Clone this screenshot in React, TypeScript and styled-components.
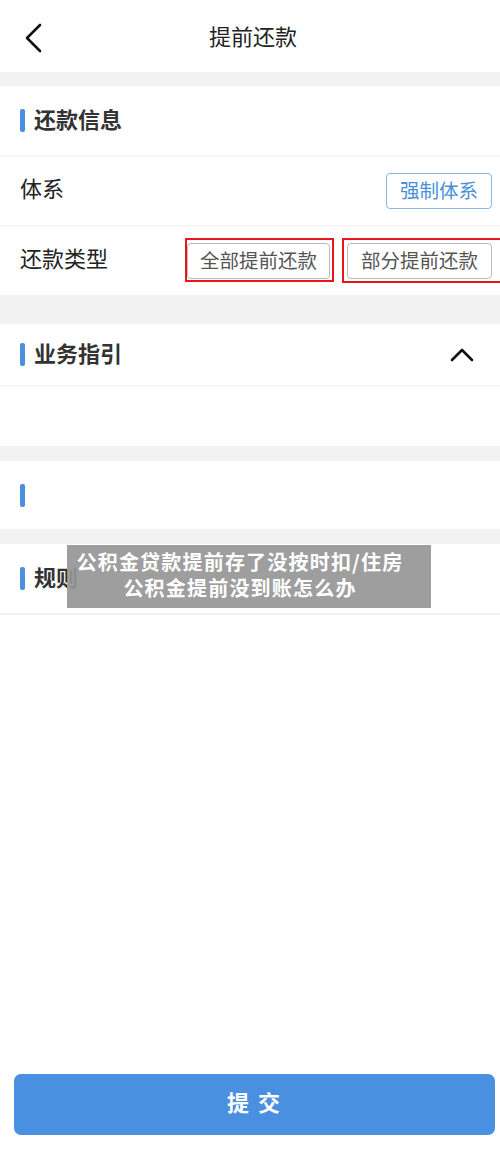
import React from "react";
import styled, { createGlobalStyle } from "styled-components";

const Global = createGlobalStyle`
  html, body { margin: 0; padding: 0; background: #fff; }
  body { overflow-x: hidden; font-family: "Noto Sans CJK SC", "Noto Sans", sans-serif; }
  * { box-sizing: border-box; }
`;

const Page = styled.div`
  position: relative;
  width: 500px;
  min-height: 1154px;
  display: flex;
  flex-direction: column;
  background: #f2f2f2;
  overflow: hidden;
`;

const Header = styled.header`
  height: 72px;
  background: #fff;
  display: flex;
  align-items: center;
  justify-content: center;
  position: relative;
`;

const BackBtn = styled.div`
  position: absolute;
  left: 22px;
  top: 22px;
  width: 24px;
  height: 32px;
`;

const Title = styled.h1`
  margin: 0 0 2px 6px;
  font-size: 22px;
  font-weight: 400;
  color: #222;
  letter-spacing: 0;
`;

const Card = styled.section<{ $gap: number }>`
  margin-top: ${(p) => p.$gap}px;
  background: #fff;
  display: flex;
  flex-direction: column;
`;

const SectionHead = styled.div<{ $h: number; $flat?: boolean }>`
  height: ${(p) => p.$h}px;
  display: flex;
  align-items: center;
  padding: 0 26px 0 20px;
  border-bottom: ${(p) => (p.$flat ? "none" : "2px solid #f5f5f5")};
`;

const Bar = styled.span`
  width: 5px;
  height: 23px;
  border-radius: 2px;
  background: #4a90e0;
  margin-right: 9px;
`;

const SectionTitle = styled.span`
  font-size: 22px;
  font-weight: 700;
  color: #333;
  flex: 1;
  margin-bottom: 5px;
`;

const Row = styled.div<{ $last?: boolean }>`
  height: ${(p) => (p.$last ? 68 : 70)}px;
  display: flex;
  align-items: center;
  padding: 0 8px 0 20px;
  border-bottom: ${(p) => (p.$last ? "none" : "2px solid #f5f5f5")};
`;

const Label = styled.span`
  font-size: 22px;
  color: #222;
  flex: 1;
  margin-bottom: 8px;
`;

const OutlineBtn = styled.div<{ $blue?: boolean; $w: number }>`
  width: ${(p) => p.$w}px;
  height: 36px;
  padding-bottom: 3px;
  border: 1px solid ${(p) => (p.$blue ? "#86b9e3" : "#b9b9b9")};
  border-radius: 4px;
  display: flex;
  align-items: center;
  justify-content: center;
  font-size: 19.5px;
  color: ${(p) => (p.$blue ? "#4a90d9" : "#555")};
  background: #fff;
`;

const Marked = styled.div<{ $t: number; $r: number; $b: number; $l: number }>`
  position: relative;
  &::after {
    content: "";
    position: absolute;
    top: -${(p) => p.$t}px;
    right: -${(p) => p.$r}px;
    bottom: -${(p) => p.$b}px;
    left: -${(p) => p.$l}px;
    border: 2px solid #e8161b;
    pointer-events: none;
  }
`;

const BtnGroup = styled.div`
  display: flex;
  gap: 17px;
`;

const EmptyBlock = styled.div`
  height: 59px;
`;

const Fill = styled.div`
  flex: 1;
  margin-top: 2px;
  background: #fff;
  display: flex;
  flex-direction: column;
  justify-content: flex-end;
  padding: 0 5px 19px 14px;
`;

const Submit = styled.button`
  width: 481px;
  height: 61px;
  border: none;
  border-radius: 7px;
  background: #4a90e0;
  color: #fff;
  font-family: "Noto Sans CJK SC", sans-serif;
  font-size: 22px;
  font-weight: 700;
  letter-spacing: 2px;
  padding: 0 0 8px;
`;

const Caption = styled.div`
  position: absolute;
  left: 67px;
  top: 545px;
  width: 364px;
  height: 63px;
  background: rgba(150, 150, 150, 0.92);
  color: #fff;
  font-size: 20px;
  font-weight: 700;
  line-height: 26px;
  letter-spacing: 1.2px;
  text-align: center;
  padding: 4px 18px 0 0;
  white-space: nowrap;
`;

export default function App() {
  return (
    <>
      <Global />
      <Page>
        <Header>
          <BackBtn>
            <svg width="24" height="32" viewBox="0 0 24 32">
              <path d="M18 3 L5 16 L18 29" fill="none" stroke="#111" strokeWidth="2.6" strokeLinecap="round" strokeLinejoin="round" />
            </svg>
          </BackBtn>
          <Title>提前还款</Title>
        </Header>

        <Card $gap={14}>
          <SectionHead $h={71}>
            <Bar />
            <SectionTitle>还款信息</SectionTitle>
          </SectionHead>
          <Row>
            <Label>体系</Label>
            <OutlineBtn $blue $w={106}>强制体系</OutlineBtn>
          </Row>
          <Row $last>
            <Label>还款类型</Label>
            <BtnGroup>
              <Marked $t={5} $r={4} $b={3} $l={2}>
                <OutlineBtn $w={143}>全部提前还款</OutlineBtn>
              </Marked>
              <Marked $t={5} $r={14} $b={4} $l={5}>
                <OutlineBtn $w={145}>部分提前还款</OutlineBtn>
              </Marked>
            </BtnGroup>
          </Row>
        </Card>

        <Card $gap={29}>
          <SectionHead $h={63}>
            <Bar />
            <SectionTitle>业务指引</SectionTitle>
            <svg width="24" height="16" viewBox="0 0 24 16">
              <path d="M2 13 L12 3 L22 13" fill="none" stroke="#111" strokeWidth="2.6" strokeLinecap="round" strokeLinejoin="round" />
            </svg>
          </SectionHead>
          <EmptyBlock />
        </Card>

        <Card $gap={15}>
          <SectionHead $h={68} $flat>
            <Bar />
          </SectionHead>
        </Card>

        <Card $gap={15}>
          <SectionHead $h={69} $flat>
            <Bar />
            <SectionTitle>规则</SectionTitle>
          </SectionHead>
        </Card>

        <Fill>
          <Submit>提 交</Submit>
        </Fill>

        <Caption>
          公积金贷款提前存了没按时扣/住房
          <br />
          公积金提前没到账怎么办
        </Caption>
      </Page>
    </>
  );
}
